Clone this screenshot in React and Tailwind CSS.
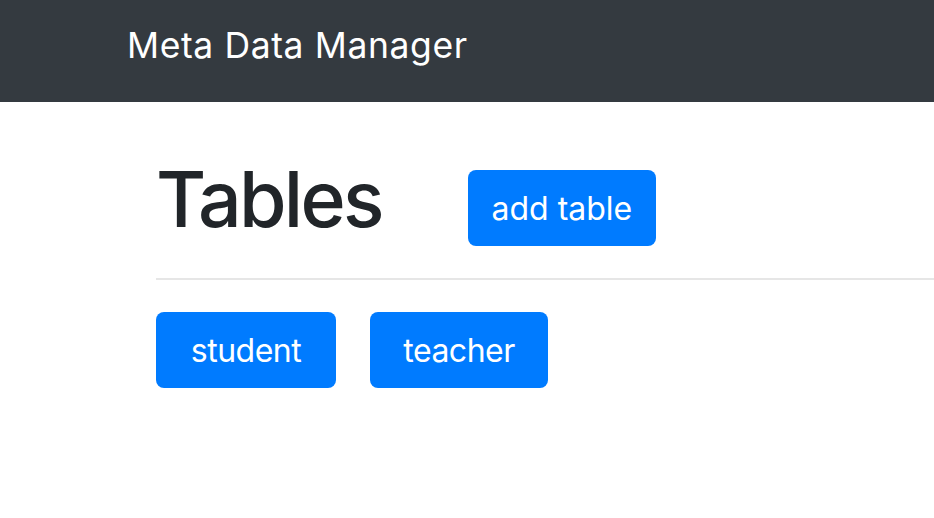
export default function App() {
  const font = { fontFamily: 'Inter, "Noto Sans", sans-serif' };
  return (
    <div className="min-h-[518px] w-[934px] bg-white" style={font}>
      <nav className="flex h-[102px] items-center bg-[#343a40] pb-[11px] pl-[127px]">
        <span className="text-[35.5px] leading-none text-white tracking-[0.6px]">Meta Data Manager</span>
      </nav>
      <main className="pl-[156px] pt-[59px]">
        <div className="flex items-start gap-[86px]">
          <h1 className="text-[77px] font-medium leading-none text-[#212529] tracking-[-2.7px]">Tables</h1>
          <button className="mt-[9px] flex h-[76px] w-[188px] items-center justify-center rounded-[8px] bg-[#007bff] pt-[2px] text-[32px] text-white">add table</button>
        </div>
        <div className="mt-[32px] h-[2px] bg-[#e6e6e6]" />
        <div className="mt-[32px] flex gap-[34px]">
          <button className="flex h-[76px] w-[180px] items-center justify-center rounded-[8px] bg-[#007bff] pt-[1px] text-[32px] text-white tracking-[-0.5px]">student</button>
          <button className="flex h-[76px] w-[178px] items-center justify-center rounded-[8px] bg-[#007bff] pt-[1px] text-[32px] text-white tracking-[-0.5px]">teacher</button>
        </div>
      </main>
    </div>
  );
}
